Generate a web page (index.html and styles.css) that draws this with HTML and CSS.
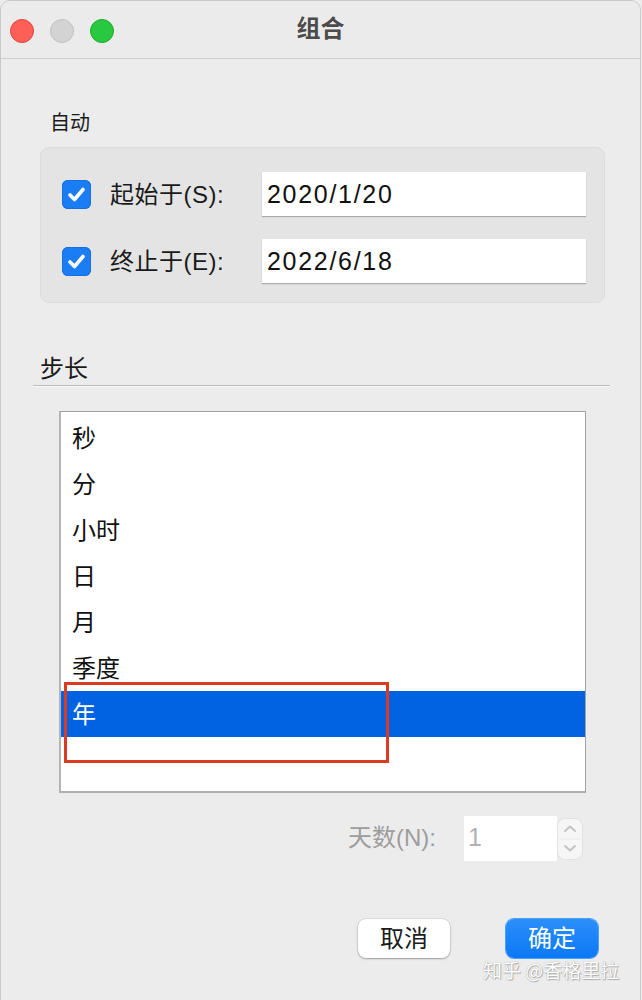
FILE: index.html
```html
<!DOCTYPE html>
<html lang="zh">
<head>
<meta charset="utf-8">
<title>组合</title>
<link rel="stylesheet" href="styles.css">
</head>
<body>
<div class="window">
  <div class="titlebar">
    <div class="lights">
      <span class="light red"></span>
      <span class="light gray"></span>
      <span class="light green"></span>
    </div>
    <div class="title">组合</div>
    <div></div>
  </div>
  <div class="content">
    <div class="auto-label">自动</div>
    <div class="group">
      <div class="row">
        <span class="checkbox"><svg width="29" height="29" viewBox="0 0 29 29"><polyline points="8,15 12.5,19.5 21,9.5" fill="none" stroke="#fff" stroke-width="3.6" stroke-linecap="round" stroke-linejoin="round"/></svg></span>
        <span class="label">起始于(S):</span>
        <div class="input">2020/1/20</div>
      </div>
      <div class="row">
        <span class="checkbox"><svg width="29" height="29" viewBox="0 0 29 29"><polyline points="8,15 12.5,19.5 21,9.5" fill="none" stroke="#fff" stroke-width="3.6" stroke-linecap="round" stroke-linejoin="round"/></svg></span>
        <span class="label">终止于(E):</span>
        <div class="input">2022/6/18</div>
      </div>
    </div>
    <div class="section-title">步长</div>
    <div class="sep"></div>
    <div class="list">
      <div class="item">秒</div>
      <div class="item">分</div>
      <div class="item">小时</div>
      <div class="item">日</div>
      <div class="item">月</div>
      <div class="item">季度</div>
      <div class="item selected">年</div>
      <div class="highlight"></div>
    </div>
    <div class="days-row">
      <span class="days-label">天数(N):</span>
      <div class="days-input">1</div>
      <div class="stepper">
        <svg width="24" height="40" viewBox="0 0 24 40">
          <polyline points="7,12 12,7.5 17,12" fill="none" stroke="#c4c4c4" stroke-width="2" stroke-linecap="round" stroke-linejoin="round"/>
          <line x1="1" y1="20" x2="23" y2="20" stroke="#e6e6e6" stroke-width="1"/>
          <polyline points="7,27 12,31.5 17,27" fill="none" stroke="#c4c4c4" stroke-width="2" stroke-linecap="round" stroke-linejoin="round"/>
        </svg>
      </div>
    </div>
    <div class="buttons">
      <div class="btn cancel">取消</div>
      <div class="btn ok">确定</div>
    </div>
    <div class="watermark">知乎 @香格里拉</div>
  </div>
</div>
</body>
</html>
```

FILE: styles.css
```css
html, body {
  margin: 0;
  padding: 0;
  background: #ececec;
}
body {
  font-family: "Liberation Sans", "Noto Sans CJK SC", sans-serif;
  color: #1b1b1b;
  width: 642px;
  height: 1000px;
  overflow: hidden;
}
.window {
  position: relative;
  width: 641px;
  height: 1010px;
  border: 1px solid #c9c9c9;
  border-radius: 10px 10px 0 0;
  background: #ececec;
  box-sizing: border-box;
}
.titlebar {
  height: 57px;
  border-bottom: 1px solid #cdcdcd;
  display: grid;
  grid-template-columns: 1fr auto 1fr;
  align-items: center;
  background: #ebebeb;
  border-radius: 10px 10px 0 0;
}
.lights {
  display: flex;
  gap: 16px;
  padding-left: 9px;
  padding-top: 2px;
}
.light {
  width: 24px;
  height: 24px;
  border-radius: 50%;
  box-sizing: border-box;
}
.red { background: #fe5f57; border: 1px solid #e0443e; }
.gray { background: #d3d3d3; border: 1px solid #c2c2c2; }
.green { background: #28c840; border: 1px solid #1aab29; }
.title {
  font-family: "Noto Sans CJK SC", sans-serif;
  font-size: 24px;
  font-weight: 700;
  color: #4b4b4b;
  padding-bottom: 6px;
}
.content {
  position: relative;
  display: flow-root;
}
.auto-label {
  font-family: "Noto Sans CJK SC", sans-serif;
  font-size: 20px;
  line-height: 24px;
  margin: 51px 0 0 49px;
}
.group {
  margin: 13px 0 0 39px;
  width: 565px;
  height: 156px;
  box-sizing: border-box;
  background: #e4e4e4;
  border: 1px solid #dcdcdc;
  border-radius: 9px;
  padding: 24px 0 0 21px;
  display: flex;
  flex-direction: column;
  gap: 23px;
}
.row {
  display: flex;
  align-items: center;
  height: 44px;
}
.checkbox {
  width: 29px;
  height: 29px;
  border-radius: 6px;
  background: #1b7df4;
  box-shadow: inset 0 0 0 1px #1870e0;
  display: block;
  flex: none;
}
.checkbox svg { display: block; }
.label {
  font-size: 24px;
  margin-left: 19px;
  width: 152px;
  letter-spacing: 0.5px;
  padding-bottom: 3px;
}
.input {
  width: 324px;
  height: 44px;
  box-sizing: border-box;
  background: #fff;
  box-shadow: 0 1px 1px rgba(0,0,0,0.25);
  font-size: 25px;
  line-height: 44px;
  padding-left: 5px;
  letter-spacing: 1.7px;
  color: #111;
}
.section-title {
  font-family: "Noto Sans CJK SC", sans-serif;
  font-size: 24px;
  line-height: 30px;
  margin: 49px 0 0 39px;
}
.sep {
  margin: 3px 0 0 32px;
  width: 577px;
  height: 1px;
  background: #bcbcbc;
  border-bottom: 1px solid #fafafa;
}
.list {
  position: relative;
  margin: 24px 0 0 58px;
  width: 527px;
  height: 382px;
  box-sizing: border-box;
  background: #fff;
  border: 1px solid #a3a3a3;
  border-left: 2px solid #b4b4b4;
  border-bottom: 2px solid #b0b0b0;
  padding-top: 3px;
}
.item {
  height: 46px;
  line-height: 44px;
  font-family: "Noto Sans CJK SC", sans-serif;
  font-size: 24px;
  padding-left: 11px;
  color: #111;
}
.item.selected {
  background: #0163e1;
  color: #fff;
}
.highlight {
  position: absolute;
  left: 3px;
  top: 270px;
  width: 325px;
  height: 81px;
  box-sizing: border-box;
  border: 3px solid #dc3b22;
}
.days-row {
  display: flex;
  align-items: center;
  margin: 23px 0 0 347px;
  height: 45px;
}
.days-label {
  font-size: 24px;
  color: #9d9d9d;
  width: 116px;
  padding-bottom: 6px;
}
.days-input {
  width: 93px;
  height: 45px;
  background: #fff;
  font-size: 25px;
  line-height: 43px;
  padding-left: 4px;
  box-sizing: border-box;
  color: #b2b2b2;
}
.stepper {
  margin-left: 1px;
  width: 24px;
  height: 40px;
  border-radius: 7px;
  background: #f6f6f6;
  box-shadow: 0 0 0 1px #e2e2e2;
}
.stepper svg { display: block; }
.buttons {
  display: flex;
  gap: 56px;
  margin: 58px 0 0 357px;
}
.btn {
  width: 92px;
  height: 39px;
  border-radius: 8px;
  box-sizing: border-box;
  font-family: "Noto Sans CJK SC", sans-serif;
  font-size: 24px;
  line-height: 35px;
  text-align: center;
}
.cancel {
  background: #fff;
  box-shadow: 0 1px 2px rgba(0,0,0,0.3), 0 0 0 0.5px rgba(0,0,0,0.12);
  color: #1b1b1b;
}
.ok {
  background: linear-gradient(#2c8ffb, #0b78f4);
  box-shadow: 0 0 0 1px #4aa2ff;
  color: #fff;
}
.watermark {
  position: absolute;
  left: 482px;
  top: 899px;
  font-family: "Noto Sans CJK SC", sans-serif;
  font-size: 19px;
  line-height: 24px;
  color: #fdfdfd;
  text-shadow: 0 0 1px #9a9a9a, 1px 1px 1px #b0b0b0;
  white-space: nowrap;
}
```
